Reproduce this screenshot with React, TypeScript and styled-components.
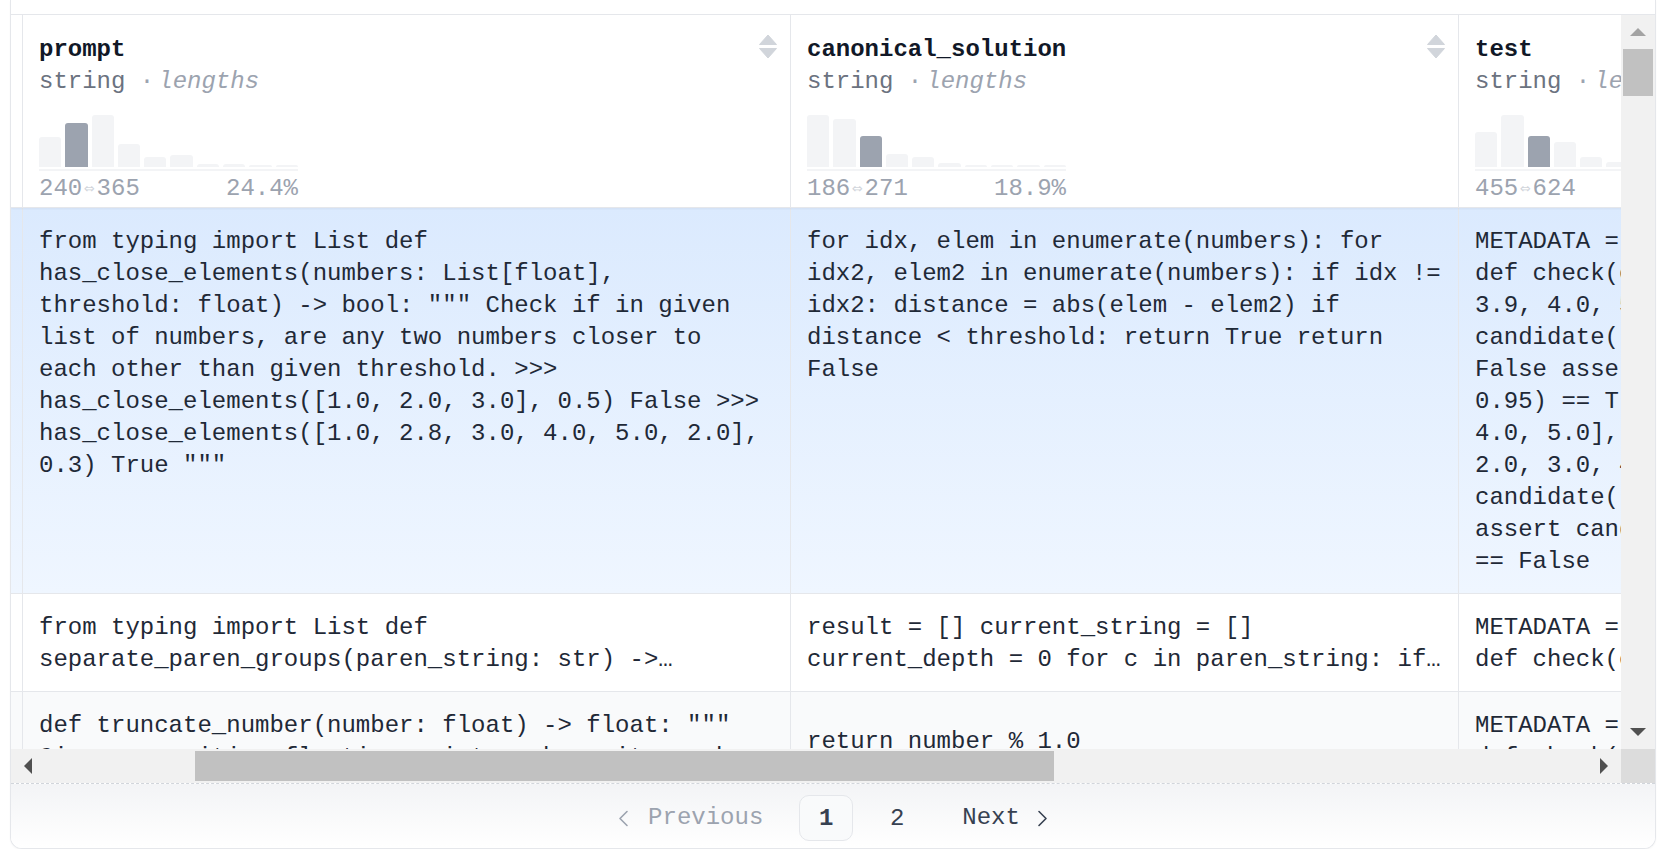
import React from "react";
import styled, { createGlobalStyle } from "styled-components";

const GlobalStyle = createGlobalStyle`
  html, body {
    margin: 0;
    padding: 0;
    background: #ffffff;
  }
  body {
    font-family: "Liberation Mono", "DejaVu Sans Mono", monospace;
    font-size: 24px;
  }
`;

type Column = {
  name: string;
  width: number;
  padRight: number;
  bars: number[];
  active: number;
  min: string;
  max: string;
  pct: string;
};

const columns: Column[] = [
  { name: "prompt", width: 768, padRight: 24, bars: [30, 44, 52, 23, 10, 12, 3, 3, 2, 2], active: 1, min: "240", max: "365", pct: "24.4%" },
  { name: "canonical_solution", width: 668, padRight: 10, bars: [52, 48, 31, 13, 10, 4, 2, 2, 2, 2], active: 2, min: "186", max: "271", pct: "18.9%" },
  { name: "test", width: 768, padRight: 24, bars: [35, 52, 31, 25, 10, 5, 2, 2, 2, 2], active: 2, min: "455", max: "624", pct: "20.1%" },
];

const template = `12px ${columns.map((c) => c.width + "px").join(" ")}`;

type Variant = "selected" | "plain" | "alt";

const rows: { variant: Variant; cells: string[] }[] = [
  {
    variant: "selected",
    cells: [
      `from typing import List def has_close_elements(numbers: List[float], threshold: float) -> bool: """ Check if in given list of numbers, are any two numbers closer to each other than given threshold. >>> has_close_elements([1.0, 2.0, 3.0], 0.5) False >>> has_close_elements([1.0, 2.8, 3.0, 4.0, 5.0, 2.0], 0.3) True """`,
      `for idx, elem in enumerate(numbers): for idx2, elem2 in enumerate(numbers): if idx != idx2: distance = abs(elem - elem2) if distance < threshold: return True return False`,
      `METADATA = { 'author': 'jt', 'dataset': 'test' } def check(candidate): assert candidate([1.0, 2.0, 3.9, 4.0, 5.0, 2.2], 0.3) == True assert candidate([1.0, 2.0, 3.9, 4.0, 5.0, 2.2], 0.05) == False assert candidate([1.0, 2.0, 5.9, 4.0, 5.0], 0.95) == True assert candidate([1.0, 2.0, 5.9, 4.0, 5.0], 0.8) == False assert candidate([1.0, 2.0, 3.0, 4.0, 5.0, 2.0], 0.1) == True assert candidate([1.1, 2.2, 3.1, 4.1, 5.1], 1.0) == True assert candidate([1.1, 2.2, 3.1, 4.1, 5.1], 0.5) == False`,
    ],
  },
  {
    variant: "plain",
    cells: [
      `from typing import List def separate_paren_groups(paren_string: str) -> List[str]: """ Input to this function is a string containing multiple groups of nested parentheses."""`,
      `result = [] current_string = [] current_depth = 0 for c in paren_string: if c == '(': current_depth += 1 current_string.append(c)`,
      `METADATA = { 'author': 'jt', 'dataset': 'test' } def check(candidate): assert candidate('(()()) ((())) () ((())()())') == ['(()())', '((()))', '()']`,
    ],
  },
  {
    variant: "alt",
    cells: [
      `def truncate_number(number: float) -> float: """ Given a positive floating point number, it can be decomposed into and integer part (largest integer smaller than given number) and decimals."""`,
      `return number % 1.0`,
      `METADATA = { 'author': 'jt', 'dataset': 'test' } def check(candidate): assert candidate(3.5) == 0.5 assert abs(candidate(1.33) - 0.33) < 1e-6`,
    ],
  },
];

function SortIcon() {
  return (
    <SortSvg viewBox="0 0 20 26" width="20" height="26">
      <path d="M10 1 L18.5 10.5 H1.5 Z" fill="#d1d5db" strokeLinejoin="round" stroke="#d1d5db" strokeWidth="1" />
      <path d="M1.5 14.5 H18.5 L10 24 Z" fill="#d1d5db" strokeLinejoin="round" stroke="#d1d5db" strokeWidth="1" />
    </SortSvg>
  );
}

function Arrow({ dir, light }: { dir: "up" | "down" | "left" | "right"; light?: boolean }) {
  const points = {
    up: "0,8 8,0 16,8",
    down: "0,0 16,0 8,8",
    left: "8,0 8,16 0,8",
    right: "0,0 8,8 0,16",
  }[dir];
  const vertical = dir === "up" || dir === "down";
  return (
    <svg width={vertical ? 16 : 8} height={vertical ? 8 : 16} viewBox={vertical ? "0 0 16 8" : "0 0 8 16"}>
      <polygon points={points} fill={light ? "#a3a3a3" : "#505050"} />
    </svg>
  );
}

function Chevron({ dir, color }: { dir: "left" | "right"; color: string }) {
  return (
    <svg width="11" height="17" viewBox="0 0 11 17">
      <polyline
        points={dir === "left" ? "9,1.5 2,8.5 9,15.5" : "2,1.5 9,8.5 2,15.5"}
        fill="none"
        stroke={color}
        strokeWidth="1.6"
        strokeLinecap="round"
        strokeLinejoin="round"
      />
    </svg>
  );
}

function Histogram({ col }: { col: Column }) {
  return (
    <Hist>
      <Bars>
        {col.bars.map((h, i) => (
          <Bar key={i} $h={h} $active={i === col.active} />
        ))}
      </Bars>
      <Baseline />
      <Labels>
        <span>
          {col.min}
          <Dbl>⇔</Dbl>
          {col.max}
        </span>
        <span>{col.pct}</span>
      </Labels>
    </Hist>
  );
}

export default function App() {
  return (
    <>
      <GlobalStyle />
      <Frame>
        <ScrollArea>
          <Viewport>
            <Table>
              <HeaderRow>
                <Strip />
                {columns.map((col) => (
                  <HeaderCell key={col.name}>
                    <div>
                      <Title>{col.name}</Title>
                      <Sub>
                        string <Dot>·</Dot>
                        <em>lengths</em>
                      </Sub>
                      <Histogram col={col} />
                    </div>
                    <SortIcon />
                  </HeaderCell>
                ))}
              </HeaderRow>
              {rows.map((row, r) => (
                <Row key={r} $variant={row.variant}>
                  <Strip />
                  {row.cells.map((text, c) => (
                    <Cell key={c} $pr={columns[c].padRight} $expanded={row.variant === "selected"}>
                      <CellText $clamp={row.variant !== "selected"}>{text}</CellText>
                    </Cell>
                  ))}
                </Row>
              ))}
            </Table>
          </Viewport>

          <VScroll>
            <ScrollBtn>
              <Arrow dir="up" light />
            </ScrollBtn>
            <VThumb />
            <Spacer />
            <ScrollBtn>
              <Arrow dir="down" />
            </ScrollBtn>
          </VScroll>

          <HScroll>
            <ScrollBtn>
              <Arrow dir="left" />
            </ScrollBtn>
            <HThumb />
            <Spacer />
            <ScrollBtn>
              <Arrow dir="right" />
            </ScrollBtn>
          </HScroll>
          <Corner />
        </ScrollArea>

        <Pagination>
          <PageLink $disabled $side="prev">
            <Chevron dir="left" color="#9ca3af" />
            Previous
          </PageLink>
          <PageNum $current>1</PageNum>
          <PageNum>2</PageNum>
          <PageLink $side="next">
            Next
            <Chevron dir="right" color="#374151" />
          </PageLink>
        </Pagination>
      </Frame>
    </>
  );
}

const Frame = styled.div`
  box-sizing: border-box;
  width: 1646px;
  margin-left: 10px;
  padding-top: 14px;
  border: 1px solid #e5e7eb;
  border-top: none;
  border-radius: 0 0 12px 12px;
  box-shadow: 0 1px 2px rgba(0, 0, 0, 0.04);
  overflow: hidden;
  background: #ffffff;
`;

const ScrollArea = styled.div`
  display: grid;
  grid-template-columns: 1fr 34px;
  grid-template-rows: 734px 34px;
  border-top: 1px solid #e5e7eb;
`;

const Viewport = styled.div`
  overflow: hidden;
  min-width: 0;
`;

const Table = styled.div`
  width: 2216px;
`;

const HeaderRow = styled.div`
  display: grid;
  grid-template-columns: ${template};
  border-bottom: 1px solid #e5e7eb;
  box-shadow: 0 1px 2px rgba(0, 0, 0, 0.05);
  background: #ffffff;
  position: relative;
  z-index: 1;
`;

const Strip = styled.div`
  box-sizing: border-box;
  border-right: 1px solid #e5e7eb;
`;

const HeaderCell = styled.div`
  box-sizing: border-box;
  display: flex;
  justify-content: space-between;
  align-items: flex-start;
  padding: 19px 12px 6px 16px;
  border-right: 1px solid #e5e7eb;
  min-width: 0;
  overflow: hidden;
  white-space: nowrap;
`;

const SortSvg = styled.svg`
  flex-shrink: 0;
`;

const Title = styled.div`
  font-weight: 700;
  color: #111827;
  line-height: 32px;
`;

const Sub = styled.div`
  color: #6b7280;
  line-height: 32px;

  em {
    margin-left: 4px;
    color: #9ca3af;
    font-style: italic;
  }
`;

const Dot = styled.span`
  color: #9ca3af;
`;

const Hist = styled.div`
  width: 259px;
  margin-top: 7px;
`;

const Bars = styled.div`
  display: flex;
  align-items: flex-end;
  gap: 4px;
  height: 62px;
`;

const Bar = styled.div<{ $h: number; $active: boolean }>`
  flex: 1;
  height: ${(p) => p.$h}px;
  border-radius: 3px 3px 0 0;
  background: ${(p) => (p.$active ? "#9ca3af" : "#f3f4f6")};
`;

const Baseline = styled.div`
  height: 2px;
  margin-top: 2px;
  background: #f3f4f6;
`;

const Labels = styled.div`
  display: flex;
  justify-content: space-between;
  margin-top: 6px;
  line-height: 24px;
  color: #9ca3af;
`;

const Dbl = styled.span`
  display: inline-block;
  width: 14.4px;
  text-align: center;
  font-family: "DejaVu Sans", sans-serif;
  font-size: 13px;
  color: #d1d5db;
  vertical-align: 2px;
`;

const rowBg: Record<Variant, string> = {
  selected: "linear-gradient(to bottom, #dbeafe, #eff6ff)",
  plain: "#ffffff",
  alt: "#f9fafb",
};

const Row = styled.div<{ $variant: Variant }>`
  display: grid;
  grid-template-columns: ${template};
  border-bottom: 1px solid #e5e7eb;
  background: ${(p) => rowBg[p.$variant]};
`;

const Cell = styled.div<{ $pr: number; $expanded: boolean }>`
  box-sizing: border-box;
  display: flex;
  flex-direction: column;
  justify-content: ${(p) => (p.$expanded ? "flex-start" : "center")};
  padding: 18px ${(p) => p.$pr}px 15px 16px;
  border-right: 1px solid #e5e7eb;
  min-width: 0;
`;

const CellText = styled.div<{ $clamp: boolean }>`
  color: #1f2937;
  line-height: 32px;
  white-space: normal;
  overflow: hidden;
  ${(p) =>
    p.$clamp &&
    `
    display: -webkit-box;
    -webkit-box-orient: vertical;
    -webkit-line-clamp: 2;
  `}
`;

const VScroll = styled.div`
  display: flex;
  flex-direction: column;
  background: #f1f1f1;
`;

const HScroll = styled.div`
  display: flex;
  align-items: center;
  background: #f1f1f1;
`;

const ScrollBtn = styled.div`
  flex-shrink: 0;
  display: flex;
  align-items: center;
  justify-content: center;
  width: 34px;
  height: 34px;
`;

const VThumb = styled.div`
  height: 47px;
  margin: 0 2px;
  background: #c1c1c1;
`;

const HThumb = styled.div`
  width: 859px;
  height: 30px;
  margin-left: 150px;
  background: #c1c1c1;
`;

const Spacer = styled.div`
  flex: 1;
`;

const Corner = styled.div`
  background: #dcdcdc;
`;

const Pagination = styled.div`
  display: flex;
  align-items: center;
  justify-content: center;
  gap: 17px;
  height: 60px;
  padding-top: 4px;
  border-top: 1px dashed #d1d5db;
  background: linear-gradient(to bottom, #f3f4f6, #ffffff);
`;

const PageLink = styled.div<{ $disabled?: boolean; $side: "prev" | "next" }>`
  display: flex;
  align-items: center;
  gap: ${(p) => (p.$side === "prev" ? "19px" : "17px")};
  padding: ${(p) => (p.$side === "prev" ? "0 19px 0 0" : "0 0 0 21px")};
  color: ${(p) => (p.$disabled ? "#9ca3af" : "#374151")};
  line-height: 32px;
`;

const PageNum = styled.div<{ $current?: boolean }>`
  box-sizing: border-box;
  display: flex;
  align-items: center;
  justify-content: center;
  width: 54px;
  height: 46px;
  border-radius: 10px;
  border: 1.5px solid ${(p) => (p.$current ? "#e5e7eb" : "transparent")};
  background: ${(p) => (p.$current ? "#f9fafb" : "transparent")};
  color: #374151;
  font-weight: ${(p) => (p.$current ? 700 : 400)};
`;
